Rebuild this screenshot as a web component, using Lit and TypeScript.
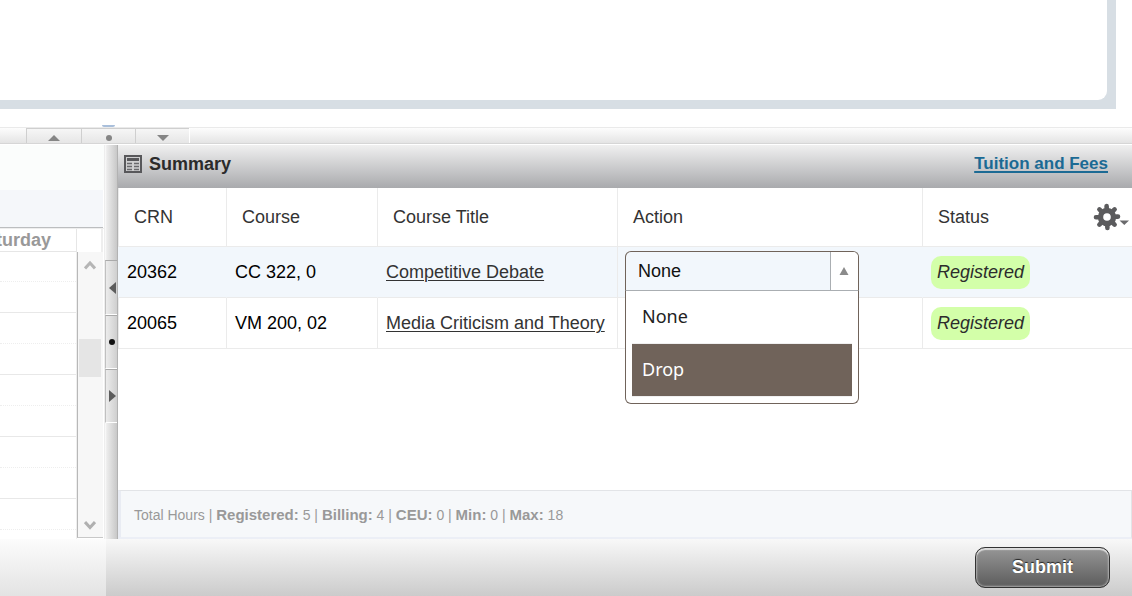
import { LitElement, html, css } from "lit";
import { customElement, property, state } from "lit/decorators.js";
import { classMap } from "lit/directives/class-map.js";

interface Registration {
  crn: string;
  course: string;
  title: string;
  status: string;
}

@customElement("action-picker")
export class ActionPicker extends LitElement {
  @property() label = "Action";
  @state() private value = "None";
  private options = ["None", "Drop"];

  static styles = css`
    :host {
      display: block;
      position: relative;
      width: 234px;
    }
    .field {
      display: flex;
      box-sizing: border-box;
      height: 40px;
      border: 1px solid #70635a;
      border-bottom-color: #aaaeb2;
      border-radius: 6px 6px 0 0;
      background: #f2f7fc;
      overflow: hidden;
    }
    select {
      flex: 1;
      min-width: 0;
      appearance: none;
      border: 0;
      outline: 0;
      margin: 0;
      padding: 0 12px;
      background: transparent;
      color: #111;
      font: 18px "Liberation Sans", Arial, sans-serif;
    }
    .toggle {
      width: 28px;
      padding: 0 2px 0 0;
      border: 0;
      border-left: 1px solid #aaaeb2;
      background: #fff;
      display: flex;
      align-items: center;
      justify-content: center;
    }
    .list {
      position: absolute;
      z-index: 2;
      top: 40px;
      left: 0;
      right: 0;
      margin: 0;
      padding: 0 6px 6px;
      list-style: none;
      background: #fff;
      border: 1px solid #70635a;
      border-top: 0;
      border-radius: 0 0 6px 6px;
      font: 18px/50px "Noto Sans", sans-serif;
      color: #222;
    }
    .option {
      padding: 0 10px 2px;
      border-bottom: 1px solid #f0f0f0;
    }
    .active {
      background: #70635a;
      color: #fff;
    }
  `;

  render() {
    return html`
      <div class="field">
        <select aria-label=${this.label} .value=${this.value}>
          ${this.options.map((o) => html`<option>${o}</option>`)}
        </select>
        <button class="toggle" aria-label="Close list">
          <svg width="10" height="8" viewBox="0 0 10 8"><path d="M5 0 9.500 8H.5z" fill="#8b8b8b" /></svg>
        </button>
      </div>
      <ul class="list" role="listbox" aria-label=${this.label}>
        ${this.options.map(
          (o) => html`<li
            role="option"
            aria-selected=${o === this.value}
            class=${classMap({ option: true, active: o === "Drop" })}
            @click=${() => (this.value = o)}
          >${o}</li>`
        )}
      </ul>
    `;
  }
}

@customElement("app-root")
export class AppRoot extends LitElement {
  private rows: Registration[] = [
    { crn: "20362", course: "CC 322, 0", title: "Competitive Debate", status: "Registered" },
    { crn: "20065", course: "VM 200, 02", title: "Media Criticism and Theory", status: "Registered" },
  ];

  private totals = [
    ["Registered:", "5"],
    ["Billing:", "4"],
    ["CEU:", "0"],
    ["Min:", "0"],
    ["Max:", "18"],
  ];

  static styles = css`
    :host {
      display: flex;
      flex-direction: column;
      min-height: 100vh;
      background: #fff;
      color: #333;
      font: 18px/20px "Liberation Sans", Arial, sans-serif;
      overflow: hidden;
    }
    button {
      font-family: inherit;
      margin: 0;
    }
    svg {
      display: block;
    }

    .upper {
      background: #d7dee4;
      margin-right: 16px;
      padding: 0 9px 9px 0;
    }
    .upper-inner {
      height: 100px;
      background: #fff;
      border-radius: 0 0 9px 0;
    }
    .between {
      height: 18px;
      display: flex;
      align-items: flex-end;
      padding-left: 102px;
    }
    .nub {
      width: 13px;
      height: 2px;
      background: #a9bfdb;
      border-radius: 0 0 2px 2px;
    }

    .hsplit {
      display: flex;
      box-sizing: border-box;
      height: 17px;
      padding-left: 26px;
      border-top: 1px solid #eaeaea;
      border-bottom: 1px solid #d6d6d6;
      background: linear-gradient(#fdfdfd, #e4e4e4);
    }
    .hbtn {
      box-sizing: border-box;
      width: 54px;
      height: 15px;
      padding: 4px 0 0;
      border: 0;
      border-left: 1px solid #cfcfcf;
      border-top: 1px solid #cfcfcf;
      background: linear-gradient(#f6f6f6, #e6e6e6);
      display: flex;
      align-items: center;
      justify-content: center;
    }
    .hbtn:first-child {
      width: 55px;
    }
    .hend {
      width: 1px;
      background: #fff;
    }

    .work {
      flex: 1;
      display: grid;
      grid-template-columns: 104px 14px minmax(0, 1fr);
      margin-top: 1px;
    }

    .calendar {
      display: flex;
      flex-direction: column;
      overflow: hidden;
    }
    .cal-top {
      height: 45px;
      background: #fbfdfc;
    }
    .cal-bar {
      height: 37px;
      margin-right: 1px;
      background: #f5f7fa;
      border-bottom: 1px solid #bcbec0;
    }
    .cal-head {
      display: grid;
      grid-template-columns: 77px 26px;
      height: 23px;
      border-top: 1px solid #eee;
      color: #999;
      font-weight: bold;
      line-height: 22px;
    }
    .day {
      display: flex;
      justify-content: flex-end;
      padding-right: 25px;
      border-right: 1px solid #e6e6e6;
      border-bottom: 1px solid #e6e6e6;
      white-space: nowrap;
      min-width: 0;
    }
    .corner {
      border-right: 2px solid #eee;
    }
    .cal-body {
      flex: 1;
      display: grid;
      grid-template-columns: 77px 26px;
      min-height: 0;
    }
    .slots {
      overflow: hidden;
      height: 287px;
      border-right: 1px solid #eee;
    }
    .half {
      height: 29px;
      border-bottom: 1px dotted #eee;
    }
    .hour {
      height: 30px;
      border-bottom: 1px solid #e8e8e8;
    }
    .hour + .half {
      height: 30px;
    }
    .scroll {
      display: flex;
      flex-direction: column;
      align-items: center;
      justify-content: space-between;
      background: #f7f7f7;
      border-left: 1px solid #b8b8b8;
      border-bottom: 1px solid #c8c8c8;
      margin-bottom: 1px;
      padding: 8px 2px 7px 1px;
    }
    .thumb {
      width: 22px;
      height: 38px;
      background: #e5e5e5;
      margin: 69px 0 auto;
    }

    .vsplit {
      display: flex;
      flex-direction: column;
      box-sizing: border-box;
      border-left: 1px solid #eee;
      border-right: 1px solid #b2b2b2;
      padding-top: 115px;
      background: linear-gradient(90deg, #fcfcfc, #ececec 15%, #c8c8c8);
    }
    .vbtn {
      box-sizing: border-box;
      height: 54px;
      width: 12px;
      padding: 0 1px 0 0;
      border: 0;
      border-left: 1px solid #c0c0c0;
      border-top: 1px solid #aaa;
      border-bottom: 1px solid #fff;
      background: linear-gradient(90deg, #ececec, #cfcfcf);
      display: flex;
      align-items: center;
      justify-content: flex-end;
    }
    .vbtn:first-child {
      height: 55px;
    }

    .summary {
      display: flex;
      flex-direction: column;
    }
    .title-bar {
      display: flex;
      align-items: center;
      box-sizing: border-box;
      height: 43px;
      padding: 0 24px 6px 6px;
      background: linear-gradient(#f0f0f0, #a9aaad);
    }
    h2 {
      margin: 0 auto 0 7px;
      font-size: 18px;
      line-height: 20px;
      color: #2b2b2b;
    }
    .fees {
      font-size: 17px;
      font-weight: bold;
      color: #1b6a94;
      text-underline-offset: 2px;
      text-decoration-thickness: 2px;
    }
    table {
      width: 100%;
      table-layout: fixed;
      border-collapse: separate;
      border-spacing: 0;
    }
    .c-crn { width: 108px; }
    .c-course { width: 151px; }
    .c-title { width: 240px; }
    .c-action { width: 305px; }
    th,
    td {
      box-sizing: border-box;
      border-left: 1px solid #ebebeb;
      border-bottom: 1px solid #ebebeb;
      text-align: left;
      font-weight: normal;
      white-space: nowrap;
    }
    th {
      height: 59px;
      padding: 0 0 0 15px;
    }
    td {
      height: 51px;
      padding: 0 0 0 8px;
      color: #000;
    }
    .selected td {
      background: #f2f7fc;
      border-left-color: #f2f7fc;
    }
    .selected .act {
      border-left-color: #ebebeb;
    }
    .act {
      vertical-align: top;
      padding: 4px 0 0 7px;
    }
    .course-link {
      color: #333;
      text-underline-offset: 2px;
      text-decoration-thickness: 1px;
    }
    .last {
      display: flex;
      align-items: center;
      justify-content: space-between;
      padding-right: 3px;
    }
    .gear {
      display: flex;
      padding: 0;
      border: 0;
      background: none;
    }
    .badge {
      display: block;
      width: fit-content;
      padding: 0 6px;
      line-height: 33px;
      border-radius: 10px;
      background: #d3ffa9;
      color: #2c2c2c;
      font-style: italic;
    }
    .totals {
      box-sizing: border-box;
      height: 49px;
      margin-top: auto;
      padding: 0 13px;
      border: 1px solid #e2e4e7;
      border-bottom: 2px solid #eceff6;
      border-left: 3px solid #e9ecf3;
      background: #f6f8fa;
      color: #999;
      font-size: 14px;
      line-height: 48px;
    }
    .totals b {
      font-size: 15px;
    }

    .footer {
      display: grid;
      grid-template-columns: 106px 1fr;
      height: 57px;
    }
    .foot-left {
      background: linear-gradient(#fcfcfc, #e3e3e3);
    }
    .foot-right {
      display: flex;
      justify-content: flex-end;
      align-items: flex-start;
      padding: 8px 22px 0;
      background: linear-gradient(#f8f8f8, #cbcbcb);
    }
    .submit {
      box-sizing: border-box;
      width: 135px;
      height: 41px;
      padding: 0 0 1px;
      border: 1px solid #333;
      border-radius: 10px;
      background: linear-gradient(#969696, #5c5c5c);
      box-shadow: inset 0 2px 1px #ddd, inset 0 0 2px 1px #aaa;
      color: #fff;
      font-size: 18px;
      font-weight: bold;
      text-shadow: 0 -1px 1px #222;
    }
  `;

  render() {
    return html`
      <section class="upper"><div class="upper-inner"></div></section>
      <div class="between"><span class="nub"></span></div>

      <div class="hsplit">
        <button class="hbtn" aria-label="Expand lower panels">
          <svg width="12" height="6" viewBox="0 0 12 6"><path d="M0 6 6 0l6 6z" fill="#858585" /></svg>
        </button>
        <button class="hbtn" aria-label="Reset height">
          <svg width="6" height="6" viewBox="0 0 6 6"><circle cx="3" cy="3" r="3" fill="#858585" /></svg>
        </button>
        <button class="hbtn" aria-label="Collapse lower panels">
          <svg width="12" height="6" viewBox="0 0 12 6"><path d="M0 0h12L6 6z" fill="#858585" /></svg>
        </button>
        <span class="hend"></span>
      </div>

      <main class="work">
        <section class="calendar">
          <div class="cal-top"></div>
          <div class="cal-bar"></div>
          <div class="cal-head"><div class="day">Saturday</div><div class="corner"></div></div>
          <div class="cal-body">
            <div class="slots">
              ${[0, 1, 2, 3, 4].map(() => html`<div class="half"></div><div class="hour"></div>`)}
            </div>
            <div class="scroll">
              <svg width="12" height="10" viewBox="0 0 12 10"><path d="M1 8.500 6 3l5 5.500" fill="none" stroke="#b5b5b5" stroke-width="3" /></svg>
              <div class="thumb"></div>
              <svg width="12" height="10" viewBox="0 0 12 10"><path d="M1 2 6 7.500 11 2" fill="none" stroke="#b0b0b0" stroke-width="3" /></svg>
            </div>
          </div>
        </section>

        <div class="vsplit">
          <button class="vbtn" aria-label="Expand summary">
            <svg width="7" height="12" viewBox="0 0 7 12"><path d="M7 0v12L0 6z" fill="#5c5c5c" /></svg>
          </button>
          <button class="vbtn" aria-label="Reset width">
            <svg width="8" height="6" viewBox="0 0 8 6"><circle cx="4" cy="3" r="3" fill="#111" /></svg>
          </button>
          <button class="vbtn" aria-label="Collapse summary">
            <svg width="7" height="12" viewBox="0 0 7 12"><path d="M0 0v12l7-6z" fill="#5c5c5c" /></svg>
          </button>
        </div>

        <section class="summary">
          <div class="title-bar">
            <svg width="18" height="18" viewBox="0 0 18 18">
              <rect x="1" y="1" width="16" height="16" fill="#cfcfd0" stroke="#58585b" stroke-width="2" />
              <path d="M3 4.500h12" stroke="#58585b" stroke-width="3" />
              <path d="M3 8.500h5M10 8.500h5M3 11.500h5M10 11.500h5M3 14.500h5M10 14.500h5" stroke="#69696c" stroke-width="1.400" />
            </svg>
            <h2>Summary</h2>
            <a class="fees" href="#fees">Tuition and Fees</a>
          </div>

          <table>
            <colgroup>
              <col class="c-crn" /><col class="c-course" /><col class="c-title" /><col class="c-action" /><col />
            </colgroup>
            <thead>
              <tr>
                <th>CRN</th>
                <th>Course</th>
                <th>Course Title</th>
                <th>Action</th>
                <th>
                  <div class="last">
                    Status
                    <button class="gear" aria-label="Column settings">
                      <svg width="36" height="28" viewBox="0 0 36 28">
                        <g stroke="#5b5b5d" stroke-width="4.600" stroke-linecap="round">
                          <path d="M13.600 3l.8 22M3 14.200l22-.6M6.400 6.400l15.200 15.200M21.600 6.400 6.400 21.600" />
                        </g>
                        <circle cx="14" cy="14" r="9.200" fill="#5b5b5d" />
                        <circle cx="14" cy="14" r="3.800" fill="#fff" />
                        <path d="M26.500 17.500h9.500l-4.700 4.500z" fill="#6a6a6c" />
                      </svg>
                    </button>
                  </div>
                </th>
              </tr>
            </thead>
            <tbody>
              ${this.rows.map(
                (r, i) => html`<tr class=${classMap({ selected: i === 0 })}>
                  <td>${r.crn}</td>
                  <td>${r.course}</td>
                  <td><a class="course-link" href="#course">${r.title}</a></td>
                  <td class="act">
                    ${i === 0 ? html`<action-picker label="Action for ${r.crn}"></action-picker>` : ""}
                  </td>
                  <td><span class="badge">${r.status}</span></td>
                </tr>`
              )}
            </tbody>
          </table>

          <div class="totals">
            Total Hours${this.totals.map(([k, v]) => html` | <b>${k}</b> ${v}`)}
          </div>
        </section>
      </main>

      <footer class="footer">
        <div class="foot-left"></div>
        <div class="foot-right"><button class="submit">Submit</button></div>
      </footer>
    `;
  }
}
